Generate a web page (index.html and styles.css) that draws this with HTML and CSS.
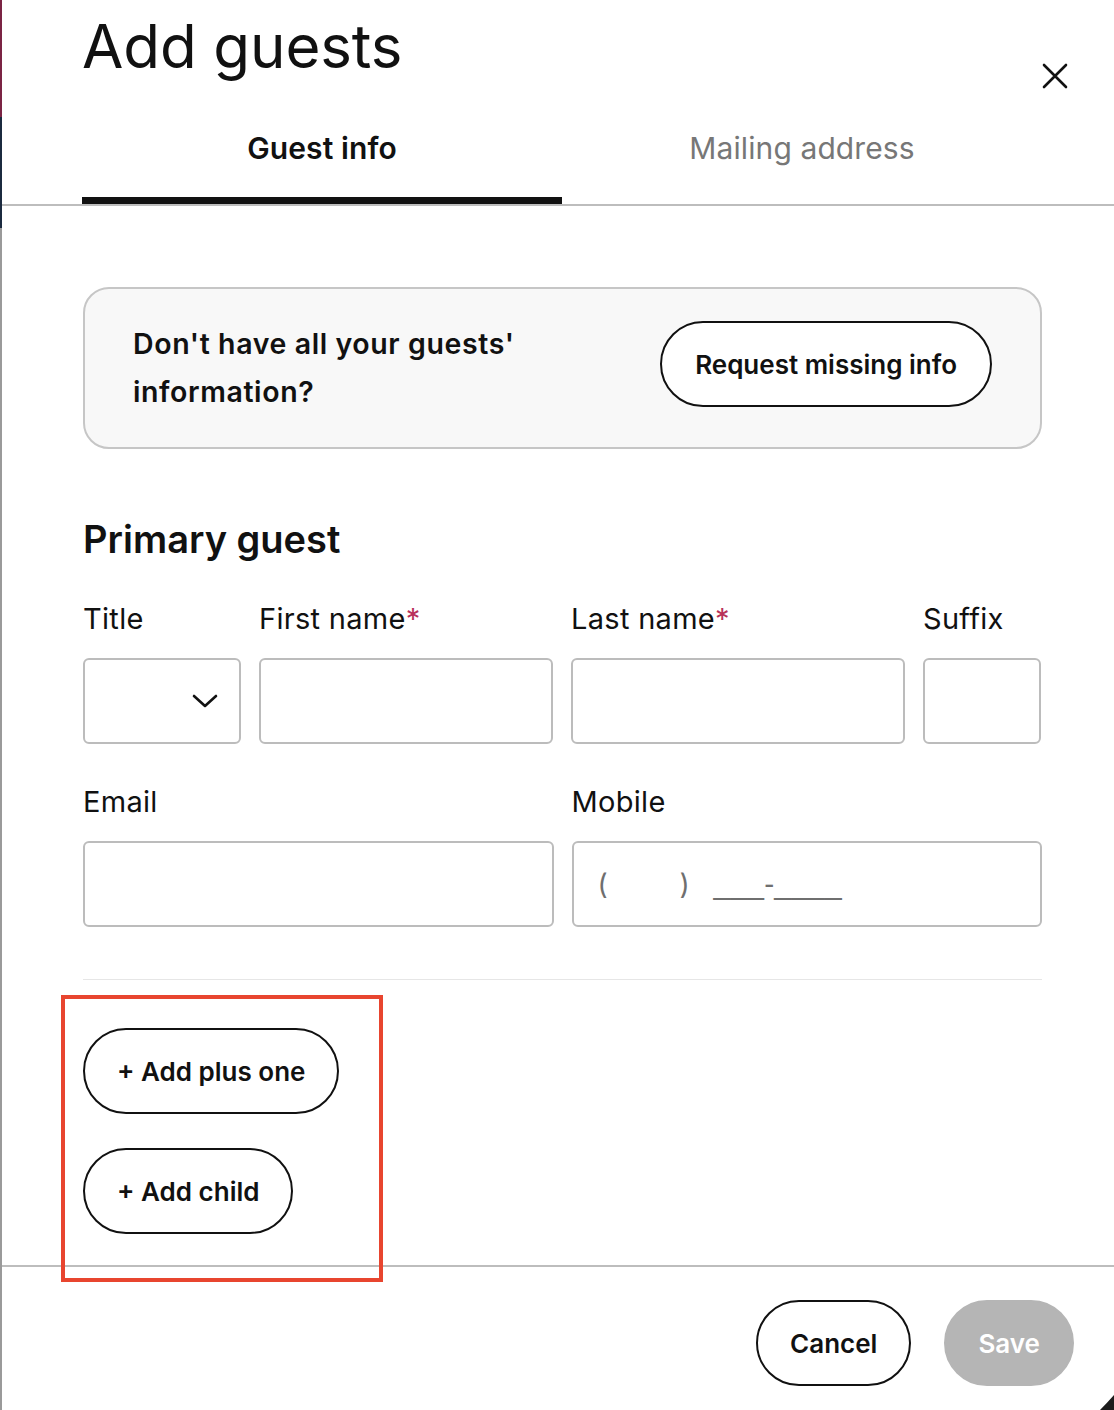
FILE: index.html
```html
<!DOCTYPE html>
<html lang="en">
<head>
<meta charset="utf-8">
<title>Add guests</title>
<link rel="stylesheet" href="styles.css">
</head>
<body>
<div class="page">
  <div class="edge"></div>
  <div class="modal">
    <header class="head">
      <h1 class="title">Add guests</h1>
      <button class="close" aria-label="Close">
        <svg width="26" height="26" viewBox="0 0 26 26"><path d="M2 2 L24 24 M24 2 L2 24" stroke="#111" stroke-width="2.6" stroke-linecap="round" fill="none"/></svg>
      </button>
    </header>
    <nav class="tabs">
      <div class="tab active">Guest info</div>
      <div class="tab">Mailing address</div>
    </nav>

    <main class="body">
      <section class="card">
        <p class="card-text">Don't have all your guests'<br>information?</p>
        <button class="pill">Request missing info</button>
      </section>

      <h2 class="section">Primary guest</h2>

      <div class="grid names">
        <label class="field">
          <span class="label">Title</span>
          <span class="input select">
            <svg width="26" height="16" viewBox="0 0 26 16"><path d="M2 3 L13 13 L24 3" stroke="#111" stroke-width="2.6" fill="none" stroke-linecap="round" stroke-linejoin="round"/></svg>
          </span>
        </label>
        <label class="field">
          <span class="label">First name<span class="req">*</span></span>
          <span class="input"></span>
        </label>
        <label class="field">
          <span class="label">Last name<span class="req">*</span></span>
          <span class="input"></span>
        </label>
        <label class="field">
          <span class="label">Suffix</span>
          <span class="input"></span>
        </label>
      </div>

      <div class="grid contact">
        <label class="field">
          <span class="label">Email</span>
          <span class="input"></span>
        </label>
        <label class="field">
          <span class="label">Mobile</span>
          <span class="input phone"><span class="p1">(</span><span class="p2">)</span><span class="p3">___-____</span></span>
        </label>
      </div>

      <hr class="rule">

      <div class="adds">
        <button class="pill add">+ Add plus one</button>
        <button class="pill add">+ Add child</button>
      </div>
    </main>

    <footer class="foot">
      <button class="pill cancel">Cancel</button>
      <button class="pill save">Save</button>
    </footer>

    <div class="highlight"></div>
    <svg class="corner" width="16" height="16" viewBox="0 0 16 16"><path d="M2 16 Q9 9 16 1 L16 16 Z" fill="#1c1c1c"/></svg>
  </div>
</div>
</body>
</html>
```

FILE: styles.css
```css
* { box-sizing: border-box; }
html, body { margin: 0; padding: 0; background: #fff; }
body {
  font-family: "Inter", "Noto Sans", "Liberation Sans", sans-serif;
  color: #111;
  overflow: hidden;
}
button { font-family: inherit; cursor: pointer; }

.page {
  display: flex;
  width: 1114px;
  height: 1410px;
}
.edge {
  width: 2px;
  flex: none;
  background: linear-gradient(to bottom, #7b2444 0, #7b2444 117px, #1b2a3f 117px, #1b2a3f 228px, #9a9a9a 228px, #9a9a9a 100%);
}
.modal {
  position: relative;
  flex: 1;
  display: flex;
  flex-direction: column;
  background: #fff;
}

/* header */
.head {
  display: flex;
  justify-content: space-between;
  align-items: flex-start;
  padding: 0 46px 0 80px;
  height: 96px;
}
.title {
  margin: 0;
  font-size: 60px;
  font-weight: 400;
  line-height: 80px;
  letter-spacing: -0.1px;
  margin-top: 6px;
}
.close {
  margin-top: 63px;
  background: none;
  border: 0;
  padding: 0;
  width: 26px;
  height: 26px;
  display: flex;
}

/* tabs */
.tabs {
  display: flex;
  padding-left: 80px;
  border-bottom: 2px solid #bdbdbd;
}
.tab {
  width: 480px;
  height: 108px;
  display: flex;
  align-items: center;
  justify-content: center;
  font-size: 30px;
  letter-spacing: 0.1px;
  color: #777;
  border-bottom: 7px solid transparent;
  padding-top: 3px;
}
.tab.active {
  color: #111;
  font-weight: 600;
  border-bottom-color: #111;
}

/* body */
.body {
  flex: 1;
  padding: 81px 72px 0 81px;
}
.card {
  display: flex;
  align-items: center;
  justify-content: space-between;
  height: 162px;
  padding: 0 48px;
  background: #f8f8f8;
  border: 2px solid #c6c6c6;
  border-radius: 26px;
}
.card-text {
  margin: 0;
  font-size: 28.5px;
  font-weight: 600;
  line-height: 48px;
  letter-spacing: 0.6px;
}
.pill {
  height: 86px;
  border: 2px solid #111;
  border-radius: 43px;
  background: #fff;
  color: #111;
  font-size: 26px;
  font-weight: 600;
  padding: 0 33px;
  white-space: nowrap;
  flex: none;
}
.card .pill { margin-top: -8px; }

.section {
  margin: 66px 0 0;
  font-size: 38px;
  font-weight: 600;
  line-height: 48px;
  letter-spacing: 0;
}

.grid {
  display: grid;
  column-gap: 18px;
}
.names {
  margin-top: 39px;
  grid-template-columns: 158px 294px 334px 118px;
}
.contact {
  margin-top: 41px;
  grid-template-columns: 1fr 1fr;
}
.field {
  display: flex;
  flex-direction: column;
}
.label {
  font-size: 29px;
  line-height: 34px;
  height: 34px;
  margin-bottom: 22px;
  letter-spacing: 0.3px;
  white-space: nowrap;
  flex: none;
}
.req { color: #b8325a; }
.input {
  height: 86px;
  flex: none;
  border: 2px solid #bcbcbc;
  border-radius: 6px;
  background: #fff;
  display: flex;
  align-items: center;
}
.select {
  justify-content: flex-end;
  padding-right: 21px;
}
.phone {
  padding-left: 24px;
  font-size: 28px;
  color: #6f6f6f;
}
.p1 { width: 82px; }
.p2 { width: 34px; }
.p3 {
  font-family: "Liberation Sans", Arial, sans-serif;
  font-size: 30px;
  letter-spacing: 0.2px;
}

.rule {
  margin: 52px 0 0;
  border: 0;
  border-top: 1px solid #e6e6e6;
}

.adds {
  display: flex;
  flex-direction: column;
  align-items: flex-start;
  gap: 34px;
  margin-top: 48px;
}
.add { padding: 0 32px; }

/* footer */
.foot {
  display: flex;
  justify-content: flex-end;
  gap: 33px;
  padding: 33px 40px 0 0;
  height: 145px;
  flex: none;
  border-top: 2px solid #bdbdbd;
}
.cancel { padding: 0 32px; }
.save {
  background: #b5b5b5;
  border-color: #b5b5b5;
  color: #fff;
  padding: 0 32px;
}

/* annotation overlay */
.highlight {
  position: absolute;
  left: 59px;
  top: 995px;
  width: 322px;
  height: 287px;
  border: 4px solid #e8452f;
  pointer-events: none;
}
.corner {
  position: absolute;
  right: 0;
  bottom: 0;
}
```
